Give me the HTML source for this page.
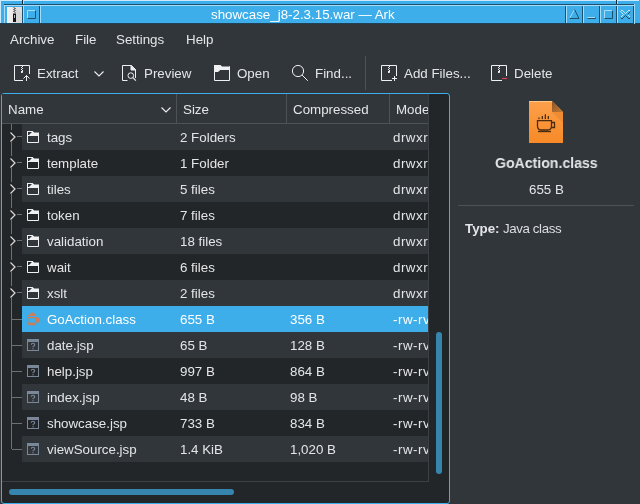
<!DOCTYPE html>
<html><head><meta charset="utf-8">
<style>
*{box-sizing:border-box;margin:0;padding:0}
html,body{width:640px;height:504px;overflow:hidden;background:#31363b}
body{position:relative;-webkit-font-smoothing:antialiased;font-family:"Liberation Sans",sans-serif;font-size:13.33px;color:#e4e5e6}
.a{position:absolute}
.t{position:absolute;white-space:nowrap;line-height:16px;will-change:transform}
svg{position:absolute;overflow:visible}
</style></head><body>

<!-- ===== title bar ===== -->
<div class="a" style="left:0px;top:0px;width:640px;height:24px;background:#3daee9"></div>
<div class="a" style="left:0px;top:0px;width:639px;height:1px;background:#cdeafa"></div>
<div class="a" style="left:0px;top:0px;width:1px;height:23px;background:#cdeafa"></div>
<div class="a" style="left:22px;top:0px;width:1px;height:4px;background:#1a2b35"></div>
<div class="a" style="left:23px;top:1px;width:1px;height:3px;background:#a6dcf7"></div>
<div class="a" style="left:616px;top:0px;width:1px;height:4px;background:#1a2b35"></div>
<div class="a" style="left:617px;top:1px;width:1px;height:3px;background:#a6dcf7"></div>
<div class="a" style="left:4px;top:4px;width:631px;height:1px;background:#1d506c"></div>
<div class="a" style="left:0px;top:23px;width:640px;height:1px;background:#1f4256"></div>
<div class="a" style="left:4px;top:5px;width:19px;height:1px;background:#a6dcf7"></div>
<div class="a" style="left:4px;top:5px;width:1px;height:18px;background:#a6dcf7"></div>
<div class="a" style="left:22px;top:6px;width:1px;height:17px;background:#1d506c"></div>
<div class="a" style="left:23px;top:5px;width:17px;height:1px;background:#a6dcf7"></div>
<div class="a" style="left:23px;top:5px;width:1px;height:18px;background:#a6dcf7"></div>
<div class="a" style="left:39px;top:6px;width:1px;height:17px;background:#1d506c"></div>
<div class="a" style="left:40px;top:5px;width:526px;height:1px;background:#a6dcf7"></div>
<div class="a" style="left:40px;top:5px;width:1px;height:18px;background:#a6dcf7"></div>
<div class="a" style="left:565px;top:6px;width:1px;height:17px;background:#1d506c"></div>
<div class="a" style="left:566px;top:5px;width:17px;height:1px;background:#a6dcf7"></div>
<div class="a" style="left:566px;top:5px;width:1px;height:18px;background:#a6dcf7"></div>
<div class="a" style="left:582px;top:6px;width:1px;height:17px;background:#1d506c"></div>
<div class="a" style="left:583px;top:5px;width:17px;height:1px;background:#a6dcf7"></div>
<div class="a" style="left:583px;top:5px;width:1px;height:18px;background:#a6dcf7"></div>
<div class="a" style="left:599px;top:6px;width:1px;height:17px;background:#1d506c"></div>
<div class="a" style="left:600px;top:5px;width:17px;height:1px;background:#a6dcf7"></div>
<div class="a" style="left:600px;top:5px;width:1px;height:18px;background:#a6dcf7"></div>
<div class="a" style="left:616px;top:6px;width:1px;height:17px;background:#1d506c"></div>
<div class="a" style="left:617px;top:5px;width:17px;height:1px;background:#a6dcf7"></div>
<div class="a" style="left:617px;top:5px;width:1px;height:18px;background:#a6dcf7"></div>
<div class="a" style="left:633px;top:6px;width:1px;height:17px;background:#1d506c"></div>
<div class="a" style="left:634px;top:4px;width:1px;height:20px;background:#a6dcf7"></div>
<div class="a" style="left:7px;top:7px;width:15px;height:16px;background:linear-gradient(90deg,#f2f2f2,#dadada)"></div>
<svg style="left:0;top:0" width="640" height="24">
  <path d="M15 7 L21.5 13.5 V22.5 H15 Z" fill="#cfcfcf" opacity="0.6"/>
  <path d="M13.5 7.5 L15.5 8.5 L13.5 9.5 L15.5 10.5 L13.5 11.5 L15.5 12.5" fill="none" stroke="#555" stroke-width="1"/>
  <path d="M13 13.5 H16 V22 H13 Z" fill="#151515"/>
  <rect x="14" y="15" width="1" height="3" fill="#bbb"/>
  <path d="M27.5 18.5 V10.5 H35.5" fill="none" stroke="#a6dcf7"/>
  <path d="M27.5 18.5 H35.5 V10.5" fill="none" stroke="#1d506c"/>
  <path d="M569.5 18.5 L574.5 9.5" fill="none" stroke="#a6dcf7"/>
  <path d="M574.5 9.5 L579 18.5 H569.5" fill="none" stroke="#1d506c"/>
  <path d="M587.5 18.5 H595.5 V17.5" fill="none" stroke="#1d506c" stroke-width="1"/>
  <path d="M587.5 18 V17.5 H595" fill="none" stroke="#a6dcf7" stroke-width="1"/>
  <path d="M604.5 18.5 V10.5 H612.5" fill="none" stroke="#a6dcf7"/>
  <path d="M604.5 18.5 H612.5 V10.5" fill="none" stroke="#1d506c"/>
  <path d="M627.5 14.5 L630.5 17.5 M620.5 17.5 L623.5 14.5 L620.5 11.5 L622 10 L625.5 13.5 L629 10 L630.5 11.5" fill="none" stroke="#c4e8fa" stroke-width="1"/>
  <path d="M630.5 11.5 L627.5 14.5 M630.5 17.5 L629 19 L625.5 15.5 L622 19 L620.5 17.5" fill="none" stroke="#1d506c" stroke-width="1"/>
</svg>
<div class="t" style="left:211px;top:7px;color:#ffffff">showcase_j8-2.3.15.war — Ark</div>


<!-- ===== menu bar ===== -->
<div class="t" style="left:10px;top:32px">Archive</div>
<div class="t" style="left:75px;top:32px">File</div>
<div class="t" style="left:116px;top:32px">Settings</div>
<div class="t" style="left:186px;top:32px">Help</div>

<!-- ===== toolbar ===== -->
<div class="t" style="left:37px;top:66px">Extract</div>
<div class="t" style="left:144px;top:66px">Preview</div>
<div class="t" style="left:237px;top:66px">Open</div>
<div class="t" style="left:315px;top:66px">Find...</div>
<div class="t" style="left:404px;top:66px">Add Files...</div>
<div class="t" style="left:514px;top:66px">Delete</div>
<div class="a" style="left:365px;top:56px;width:1px;height:34px;background:#4d5256"></div>


<svg style="left:0;top:0" width="640" height="100">
 <g fill="none" stroke="#eff0f1" stroke-width="1">
  <!-- extract -->
  <path d="M23 80.5 H14.5 V65.5 H29.5 V74"/>
  <path d="M26.5 81 V75.5 M23.5 78.5 L26.5 75.5 L29.5 78.5"/>
  
  <!-- dropdown -->
  <path d="M94.5 71.5 L99 76 L103.5 71.5" stroke-width="1.1"/>
  <!-- preview -->
  <path d="M127.5 80.5 H122.5 V65.5 H131.5 L135.5 69.5 V78"/>
  <path d="M131 65.5 V70 H135.5 Z" fill="#eff0f1"/>
  <circle cx="130.8" cy="75.6" r="2.8"/>
  <path d="M132.9 77.7 L135.8 80.6" stroke-width="1.2"/>
  <!-- open -->
  <path d="M214.5 65 V80.5 H229.5 V66.5"/>
  <path d="M214 65 H220.5 L222 66.5 H230 V70 H220.3 L218 72 H214 Z" fill="#eff0f1" stroke="none"/>
  <!-- find -->
  <circle cx="298" cy="71" r="5.6"/>
  <path d="M302 75 L307.8 80.8"/>
  <!-- add -->
  <path d="M392 80.5 H381.5 V65.5 H396.5 V76"/>
  <path d="M392 78.5 H397 M394.5 76 V81"/>
  
  <!-- delete -->
  <path d="M502 80.5 H491.5 V65.5 H506.5 V76"/>
  <path d="M502 78.5 H507" stroke="#da4453" stroke-width="1.2"/>
  

 </g>
 <g fill="#eff0f1">
  <rect x="22" y="66" width="1" height="1"/><rect x="21" y="67" width="1" height="1"/><rect x="22" y="68" width="1" height="1"/><rect x="21" y="69" width="1" height="1"/><rect x="22" y="70" width="1" height="1"/><path d="M21 71 H23 V72 Q23 73 22 73 H21 Z"/>
  <rect x="389" y="66" width="1" height="1"/><rect x="388" y="67" width="1" height="1"/><rect x="389" y="68" width="1" height="1"/><rect x="388" y="69" width="1" height="1"/><rect x="389" y="70" width="1" height="1"/><path d="M388 71 H390 V72 Q390 73 389 73 H388 Z"/>
  <rect x="499" y="66" width="1" height="1"/><rect x="498" y="67" width="1" height="1"/><rect x="499" y="68" width="1" height="1"/><rect x="498" y="69" width="1" height="1"/><rect x="499" y="70" width="1" height="1"/><path d="M498 71 H500 V72 Q500 73 499 73 H498 Z"/>

 </g>
</svg>

<!-- ===== tree view ===== -->
<div class="a" style="left:1px;top:93px;width:449px;height:411px;border:1px solid #3daee9;border-radius:3px;background:#232629"></div>
<!-- header -->
<div class="a" style="left:2px;top:94px;width:426px;height:29px;background:#31363b"></div>
<div class="a" style="left:2px;top:123px;width:426px;height:1px;background:#4d5256"></div>
<div class="a" style="left:176px;top:94px;width:1px;height:29px;background:#4d5256"></div>
<div class="a" style="left:286px;top:94px;width:1px;height:29px;background:#4d5256"></div>
<div class="a" style="left:389px;top:94px;width:1px;height:29px;background:#4d5256"></div>
<div class="t" style="left:8px;top:102px">Name</div>
<svg style="left:0;top:0" width="640" height="130"><path d="M161.5 107.5 L166 112 L170.5 107.5" fill="none" stroke="#eff0f1" stroke-width="1.1"/></svg>
<div class="t" style="left:183px;top:102px">Size</div>
<div class="t" style="left:293px;top:102px">Compressed</div>
<div class="t" style="left:396px;top:102px;width:32px;overflow:hidden">Mode</div>

<div class="a" style="left:2px;top:124px;width:426px;height:357px;overflow:hidden">
<div class="a" style="left:20px;top:0px;width:406px;height:26px;background:#31363b"></div>
<div class="a" style="left:9px;top:0px;width:1px;height:6px;background:#6e7174"></div>
<div class="a" style="left:9px;top:18px;width:1px;height:8px;background:#6e7174"></div>
<svg style="left:0;top:0px" width="20" height="26"><path d="M8.5 8.5 L13 13 L8.5 17.5" fill="none" stroke="#dcdcdc" stroke-width="1.2"/><path d="M15 12.5 H20" stroke="#6e7174" stroke-width="1"/></svg>
<svg style="left:25px;top:7px" width="12" height="12"><path d="M0 0 H5.6 L7.1 1.5 H12 V5 H0 Z" fill="#eff0f1"/><path d="M1 1 H5 L2 4 H1 Z" fill="#31363b"/><path d="M0.5 4.5 H11.5 V11.5 H0.5 Z" fill="none" stroke="#eff0f1"/></svg>
<div class="t" style="left:45px;top:6px;color:#e4e5e6">tags</div>
<div class="t" style="left:178px;top:6px;color:#e4e5e6">2 Folders</div>
<div class="t" style="left:391px;top:6px;color:#e4e5e6;letter-spacing:0.5px">drwxr</div>
<div class="a" style="left:20px;top:26px;width:406px;height:26px;background:#232629"></div>
<div class="a" style="left:9px;top:26px;width:1px;height:6px;background:#6e7174"></div>
<div class="a" style="left:9px;top:44px;width:1px;height:8px;background:#6e7174"></div>
<svg style="left:0;top:26px" width="20" height="26"><path d="M8.5 8.5 L13 13 L8.5 17.5" fill="none" stroke="#dcdcdc" stroke-width="1.2"/><path d="M15 12.5 H20" stroke="#6e7174" stroke-width="1"/></svg>
<svg style="left:25px;top:33px" width="12" height="12"><path d="M0 0 H5.6 L7.1 1.5 H12 V5 H0 Z" fill="#eff0f1"/><path d="M1 1 H5 L2 4 H1 Z" fill="#232629"/><path d="M0.5 4.5 H11.5 V11.5 H0.5 Z" fill="none" stroke="#eff0f1"/></svg>
<div class="t" style="left:45px;top:32px;color:#e4e5e6">template</div>
<div class="t" style="left:178px;top:32px;color:#e4e5e6">1 Folder</div>
<div class="t" style="left:391px;top:32px;color:#e4e5e6;letter-spacing:0.5px">drwxr</div>
<div class="a" style="left:20px;top:52px;width:406px;height:26px;background:#31363b"></div>
<div class="a" style="left:9px;top:52px;width:1px;height:6px;background:#6e7174"></div>
<div class="a" style="left:9px;top:70px;width:1px;height:8px;background:#6e7174"></div>
<svg style="left:0;top:52px" width="20" height="26"><path d="M8.5 8.5 L13 13 L8.5 17.5" fill="none" stroke="#dcdcdc" stroke-width="1.2"/><path d="M15 12.5 H20" stroke="#6e7174" stroke-width="1"/></svg>
<svg style="left:25px;top:59px" width="12" height="12"><path d="M0 0 H5.6 L7.1 1.5 H12 V5 H0 Z" fill="#eff0f1"/><path d="M1 1 H5 L2 4 H1 Z" fill="#31363b"/><path d="M0.5 4.5 H11.5 V11.5 H0.5 Z" fill="none" stroke="#eff0f1"/></svg>
<div class="t" style="left:45px;top:58px;color:#e4e5e6">tiles</div>
<div class="t" style="left:178px;top:58px;color:#e4e5e6">5 files</div>
<div class="t" style="left:391px;top:58px;color:#e4e5e6;letter-spacing:0.5px">drwxr</div>
<div class="a" style="left:20px;top:78px;width:406px;height:26px;background:#232629"></div>
<div class="a" style="left:9px;top:78px;width:1px;height:6px;background:#6e7174"></div>
<div class="a" style="left:9px;top:96px;width:1px;height:8px;background:#6e7174"></div>
<svg style="left:0;top:78px" width="20" height="26"><path d="M8.5 8.5 L13 13 L8.5 17.5" fill="none" stroke="#dcdcdc" stroke-width="1.2"/><path d="M15 12.5 H20" stroke="#6e7174" stroke-width="1"/></svg>
<svg style="left:25px;top:85px" width="12" height="12"><path d="M0 0 H5.6 L7.1 1.5 H12 V5 H0 Z" fill="#eff0f1"/><path d="M1 1 H5 L2 4 H1 Z" fill="#232629"/><path d="M0.5 4.5 H11.5 V11.5 H0.5 Z" fill="none" stroke="#eff0f1"/></svg>
<div class="t" style="left:45px;top:84px;color:#e4e5e6">token</div>
<div class="t" style="left:178px;top:84px;color:#e4e5e6">7 files</div>
<div class="t" style="left:391px;top:84px;color:#e4e5e6;letter-spacing:0.5px">drwxr</div>
<div class="a" style="left:20px;top:104px;width:406px;height:26px;background:#31363b"></div>
<div class="a" style="left:9px;top:104px;width:1px;height:6px;background:#6e7174"></div>
<div class="a" style="left:9px;top:122px;width:1px;height:8px;background:#6e7174"></div>
<svg style="left:0;top:104px" width="20" height="26"><path d="M8.5 8.5 L13 13 L8.5 17.5" fill="none" stroke="#dcdcdc" stroke-width="1.2"/><path d="M15 12.5 H20" stroke="#6e7174" stroke-width="1"/></svg>
<svg style="left:25px;top:111px" width="12" height="12"><path d="M0 0 H5.6 L7.1 1.5 H12 V5 H0 Z" fill="#eff0f1"/><path d="M1 1 H5 L2 4 H1 Z" fill="#31363b"/><path d="M0.5 4.5 H11.5 V11.5 H0.5 Z" fill="none" stroke="#eff0f1"/></svg>
<div class="t" style="left:45px;top:110px;color:#e4e5e6">validation</div>
<div class="t" style="left:178px;top:110px;color:#e4e5e6">18 files</div>
<div class="t" style="left:391px;top:110px;color:#e4e5e6;letter-spacing:0.5px">drwxr</div>
<div class="a" style="left:20px;top:130px;width:406px;height:26px;background:#232629"></div>
<div class="a" style="left:9px;top:130px;width:1px;height:6px;background:#6e7174"></div>
<div class="a" style="left:9px;top:148px;width:1px;height:8px;background:#6e7174"></div>
<svg style="left:0;top:130px" width="20" height="26"><path d="M8.5 8.5 L13 13 L8.5 17.5" fill="none" stroke="#dcdcdc" stroke-width="1.2"/><path d="M15 12.5 H20" stroke="#6e7174" stroke-width="1"/></svg>
<svg style="left:25px;top:137px" width="12" height="12"><path d="M0 0 H5.6 L7.1 1.5 H12 V5 H0 Z" fill="#eff0f1"/><path d="M1 1 H5 L2 4 H1 Z" fill="#232629"/><path d="M0.5 4.5 H11.5 V11.5 H0.5 Z" fill="none" stroke="#eff0f1"/></svg>
<div class="t" style="left:45px;top:136px;color:#e4e5e6">wait</div>
<div class="t" style="left:178px;top:136px;color:#e4e5e6">6 files</div>
<div class="t" style="left:391px;top:136px;color:#e4e5e6;letter-spacing:0.5px">drwxr</div>
<div class="a" style="left:20px;top:156px;width:406px;height:26px;background:#31363b"></div>
<div class="a" style="left:9px;top:156px;width:1px;height:6px;background:#6e7174"></div>
<div class="a" style="left:9px;top:174px;width:1px;height:8px;background:#6e7174"></div>
<svg style="left:0;top:156px" width="20" height="26"><path d="M8.5 8.5 L13 13 L8.5 17.5" fill="none" stroke="#dcdcdc" stroke-width="1.2"/><path d="M15 12.5 H20" stroke="#6e7174" stroke-width="1"/></svg>
<svg style="left:25px;top:163px" width="12" height="12"><path d="M0 0 H5.6 L7.1 1.5 H12 V5 H0 Z" fill="#eff0f1"/><path d="M1 1 H5 L2 4 H1 Z" fill="#31363b"/><path d="M0.5 4.5 H11.5 V11.5 H0.5 Z" fill="none" stroke="#eff0f1"/></svg>
<div class="t" style="left:45px;top:162px;color:#e4e5e6">xslt</div>
<div class="t" style="left:178px;top:162px;color:#e4e5e6">2 files</div>
<div class="t" style="left:391px;top:162px;color:#e4e5e6;letter-spacing:0.5px">drwxr</div>
<div class="a" style="left:20px;top:182px;width:406px;height:26px;background:#3daee9"></div>
<div class="a" style="left:9px;top:182px;width:1px;height:26px;background:#6e7174"></div>
<div class="a" style="left:10px;top:195px;width:10px;height:1px;background:#6e7174"></div>
<svg style="left:25px;top:189px" width="14" height="14"><g stroke="#cc7d58" fill="none" stroke-width="1.2"><path d="M0.6 4.6 H9.4 V8 Q9.4 10.3 7 10.3 H3 Q0.6 10.3 0.6 8 Z"/><path d="M9.6 5.3 H11.4 V8.7 H9.4"/><path d="M1.3 11.6 H8.8"/><path d="M1.5 2 V3 M3.5 0.5 V3 M5.5 -0.5 V3 M7.5 0.5 V3"/></g></svg>
<div class="t" style="left:45px;top:188px;color:#ffffff">GoAction.class</div>
<div class="t" style="left:178px;top:188px;color:#ffffff">655 B</div>
<div class="t" style="left:288px;top:188px;color:#ffffff">356 B</div>
<div class="t" style="left:391px;top:188px;color:#ffffff;letter-spacing:0.5px">-rw-rv</div>
<div class="a" style="left:20px;top:208px;width:406px;height:26px;background:#31363b"></div>
<div class="a" style="left:9px;top:208px;width:1px;height:26px;background:#6e7174"></div>
<div class="a" style="left:10px;top:221px;width:10px;height:1px;background:#6e7174"></div>
<svg style="left:25px;top:215px" width="12" height="12"><rect x="0.5" y="0.5" width="11" height="11" fill="none" stroke="#7a8798"/><rect x="0" y="0" width="12" height="3" fill="#7a8798"/><path d="M4.3 5.8 Q4.3 4.3 6 4.3 Q7.7 4.3 7.7 5.8 Q7.7 6.8 6.4 7.2 Q6 7.4 6 8 V8.3" fill="none" stroke="#7a8798" stroke-width="1.1"/><rect x="5.4" y="9.2" width="1.2" height="1.2" fill="#7a8798"/></svg>
<div class="t" style="left:45px;top:214px;color:#e4e5e6">date.jsp</div>
<div class="t" style="left:178px;top:214px;color:#e4e5e6">65 B</div>
<div class="t" style="left:288px;top:214px;color:#e4e5e6">128 B</div>
<div class="t" style="left:391px;top:214px;color:#e4e5e6;letter-spacing:0.5px">-rw-rv</div>
<div class="a" style="left:20px;top:234px;width:406px;height:26px;background:#232629"></div>
<div class="a" style="left:9px;top:234px;width:1px;height:26px;background:#6e7174"></div>
<div class="a" style="left:10px;top:247px;width:10px;height:1px;background:#6e7174"></div>
<svg style="left:25px;top:241px" width="12" height="12"><rect x="0.5" y="0.5" width="11" height="11" fill="none" stroke="#7a8798"/><rect x="0" y="0" width="12" height="3" fill="#7a8798"/><path d="M4.3 5.8 Q4.3 4.3 6 4.3 Q7.7 4.3 7.7 5.8 Q7.7 6.8 6.4 7.2 Q6 7.4 6 8 V8.3" fill="none" stroke="#7a8798" stroke-width="1.1"/><rect x="5.4" y="9.2" width="1.2" height="1.2" fill="#7a8798"/></svg>
<div class="t" style="left:45px;top:240px;color:#e4e5e6">help.jsp</div>
<div class="t" style="left:178px;top:240px;color:#e4e5e6">997 B</div>
<div class="t" style="left:288px;top:240px;color:#e4e5e6">864 B</div>
<div class="t" style="left:391px;top:240px;color:#e4e5e6;letter-spacing:0.5px">-rw-rv</div>
<div class="a" style="left:20px;top:260px;width:406px;height:26px;background:#31363b"></div>
<div class="a" style="left:9px;top:260px;width:1px;height:26px;background:#6e7174"></div>
<div class="a" style="left:10px;top:273px;width:10px;height:1px;background:#6e7174"></div>
<svg style="left:25px;top:267px" width="12" height="12"><rect x="0.5" y="0.5" width="11" height="11" fill="none" stroke="#7a8798"/><rect x="0" y="0" width="12" height="3" fill="#7a8798"/><path d="M4.3 5.8 Q4.3 4.3 6 4.3 Q7.7 4.3 7.7 5.8 Q7.7 6.8 6.4 7.2 Q6 7.4 6 8 V8.3" fill="none" stroke="#7a8798" stroke-width="1.1"/><rect x="5.4" y="9.2" width="1.2" height="1.2" fill="#7a8798"/></svg>
<div class="t" style="left:45px;top:266px;color:#e4e5e6">index.jsp</div>
<div class="t" style="left:178px;top:266px;color:#e4e5e6">48 B</div>
<div class="t" style="left:288px;top:266px;color:#e4e5e6">98 B</div>
<div class="t" style="left:391px;top:266px;color:#e4e5e6;letter-spacing:0.5px">-rw-rv</div>
<div class="a" style="left:20px;top:286px;width:406px;height:26px;background:#232629"></div>
<div class="a" style="left:9px;top:286px;width:1px;height:26px;background:#6e7174"></div>
<div class="a" style="left:10px;top:299px;width:10px;height:1px;background:#6e7174"></div>
<svg style="left:25px;top:293px" width="12" height="12"><rect x="0.5" y="0.5" width="11" height="11" fill="none" stroke="#7a8798"/><rect x="0" y="0" width="12" height="3" fill="#7a8798"/><path d="M4.3 5.8 Q4.3 4.3 6 4.3 Q7.7 4.3 7.7 5.8 Q7.7 6.8 6.4 7.2 Q6 7.4 6 8 V8.3" fill="none" stroke="#7a8798" stroke-width="1.1"/><rect x="5.4" y="9.2" width="1.2" height="1.2" fill="#7a8798"/></svg>
<div class="t" style="left:45px;top:292px;color:#e4e5e6">showcase.jsp</div>
<div class="t" style="left:178px;top:292px;color:#e4e5e6">733 B</div>
<div class="t" style="left:288px;top:292px;color:#e4e5e6">834 B</div>
<div class="t" style="left:391px;top:292px;color:#e4e5e6;letter-spacing:0.5px">-rw-rv</div>
<div class="a" style="left:20px;top:312px;width:406px;height:26px;background:#31363b"></div>
<div class="a" style="left:9px;top:312px;width:1px;height:13px;background:#6e7174"></div>
<div class="a" style="left:10px;top:325px;width:10px;height:1px;background:#6e7174"></div>
<svg style="left:25px;top:319px" width="12" height="12"><rect x="0.5" y="0.5" width="11" height="11" fill="none" stroke="#7a8798"/><rect x="0" y="0" width="12" height="3" fill="#7a8798"/><path d="M4.3 5.8 Q4.3 4.3 6 4.3 Q7.7 4.3 7.7 5.8 Q7.7 6.8 6.4 7.2 Q6 7.4 6 8 V8.3" fill="none" stroke="#7a8798" stroke-width="1.1"/><rect x="5.4" y="9.2" width="1.2" height="1.2" fill="#7a8798"/></svg>
<div class="t" style="left:45px;top:318px;color:#e4e5e6">viewSource.jsp</div>
<div class="t" style="left:178px;top:318px;color:#e4e5e6">1.4 KiB</div>
<div class="t" style="left:288px;top:318px;color:#e4e5e6">1,020 B</div>
<div class="t" style="left:391px;top:318px;color:#e4e5e6;letter-spacing:0.5px">-rw-rv</div>
</div>

<div class="a" style="left:428px;top:94px;width:1px;height:388px;background:#3b4045"></div>
<div class="a" style="left:2px;top:481px;width:427px;height:1px;background:#3b4045"></div>
<div class="a" style="left:436px;top:332px;width:6px;height:142px;border-radius:3px;background:#3585af"></div>
<div class="a" style="left:9px;top:489px;width:225px;height:6px;border-radius:3px;background:#3585af"></div>


<!-- ===== right panel ===== -->

<svg style="left:529px;top:101px" width="34" height="42">
 <defs>
  <linearGradient id="og" x1="0" y1="0" x2="0" y2="1"><stop offset="0" stop-color="#fca04b"/><stop offset="1" stop-color="#f78a27"/></linearGradient>
  <linearGradient id="fg" x1="0" y1="0" x2="1" y2="1"><stop offset="0" stop-color="#8a5424"/><stop offset="1" stop-color="#c67a34"/></linearGradient>
 </defs>
 <path d="M0 0 H23 L34 11 V42 H0 Z" fill="url(#og)"/>
 <path d="M0 0.5 H23" stroke="#ffc88a" stroke-width="1"/>
 <path d="M23 0 L34 11 H23 Z" fill="url(#fg)"/>
 <path d="M23 11 H34 V22 Z" fill="#e8842a" opacity="0.6"/>
 <g fill="none" stroke="#4a2c10" stroke-width="1.3">
  <path d="M8.5 19.7 H22.5 V25 Q22.5 29 18.5 29 H12.5 Q8.5 29 8.5 25 Z"/>
  <path d="M22.8 21.5 H25.5 V26.5 H22.5"/>
 </g>
 <g fill="#4a2c10">
  <rect x="9" y="29.8" width="13" height="1.4"/>
  <rect x="9.3" y="16.5" width="1.3" height="1.6"/>
  <rect x="12.7" y="15" width="1.3" height="3.1"/>
  <rect x="15.7" y="13.3" width="1.3" height="4.8"/>
  <rect x="18.7" y="15" width="1.3" height="3.1"/>
 </g>
</svg>

<div class="t" style="left:495px;top:155px;font-weight:bold;font-size:15px;transform:scaleX(0.94);transform-origin:0 0">GoAction.class</div>
<div class="t" style="left:529px;top:182px">655 B</div>
<div class="a" style="left:458px;top:205px;width:176px;height:1px;background:#4d5256"></div>
<div class="t" style="left:465px;top:221px;font-weight:bold">Type:</div>
<div class="t" style="left:503px;top:221px;letter-spacing:-0.4px;color:#dcdee0">Java class</div>

</body></html>
